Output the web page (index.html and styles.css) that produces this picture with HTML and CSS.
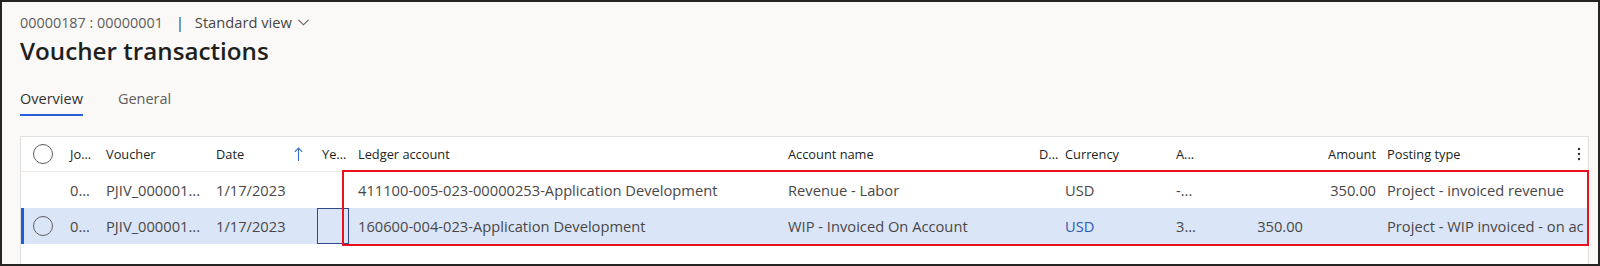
FILE: index.html
```html
<!DOCTYPE html>
<html lang="en">
<head>
    <meta charset="UTF-8">
    <title>Voucher transactions</title>
    <link rel="stylesheet" href="styles.css">
</head>
<body>
    <div class="page">
        <div class="crumbs">
            <span>00000187 : 00000001</span>
            <span class="sep">|</span>
            <span class="view">Standard view
                <svg class="chev" width="11" height="7" viewBox="0 0 11 7"><polyline points="0.5,0.8 5.5,5.8 10.5,0.8" fill="none" stroke="#605e5c" stroke-width="1.1"/></svg>
            </span>
        </div>
        <h1 class="title">Voucher transactions</h1>

        <div class="tabs">
            <div class="tab active">Overview</div>
            <div class="tab">General</div>
        </div>

        <div class="grid-wrap">
            <div class="grid">
                <div class="row head">
                    <div class="cell sel"><span class="circle"></span></div>
                    <div class="cell">Jo...</div>
                    <div class="cell">Voucher</div>
                    <div class="cell date">Date
                        <svg class="sort" width="9" height="15" viewBox="0 0 9 15"><path d="M4.5 1 V14 M0.8 4.8 L4.5 1 L8.2 4.8" fill="none" stroke="#3b6bc9" stroke-width="1.1"/></svg>
                    </div>
                    <div class="cell ye">Ye...</div>
                    <div class="cell">Ledger account</div>
                    <div class="cell">Account name</div>
                    <div class="cell short">D...</div>
                    <div class="cell">Currency</div>
                    <div class="cell">A...</div>
                    <div class="cell num"></div>
                    <div class="cell num amt">Amount</div>
                    <div class="cell">Posting type</div>
                    <div class="cell more">
                        <svg width="4" height="14" viewBox="0 0 4 14"><circle cx="2" cy="2" r="1.2" fill="#323130"/><circle cx="2" cy="7" r="1.2" fill="#323130"/><circle cx="2" cy="12" r="1.2" fill="#323130"/></svg>
                    </div>
                </div>

                <div class="row">
                    <div class="cell sel"></div>
                    <div class="cell">0...</div>
                    <div class="cell">PJIV_000001...</div>
                    <div class="cell">1/17/2023</div>
                    <div class="cell ye"></div>
                    <div class="cell">411100-005-023-00000253-Application Development</div>
                    <div class="cell">Revenue - Labor</div>
                    <div class="cell"></div>
                    <div class="cell">USD</div>
                    <div class="cell">-...</div>
                    <div class="cell num"></div>
                    <div class="cell num amt">350.00</div>
                    <div class="cell wide">Project - invoiced revenue</div>
                </div>

                <div class="row selected">
                    <div class="cell sel"><span class="circle"></span></div>
                    <div class="cell">0...</div>
                    <div class="cell">PJIV_000001...</div>
                    <div class="cell">1/17/2023</div>
                    <div class="cell ye focus"></div>
                    <div class="cell">160600-004-023-Application Development</div>
                    <div class="cell">WIP - Invoiced On Account</div>
                    <div class="cell"></div>
                    <div class="cell link">USD</div>
                    <div class="cell">3...</div>
                    <div class="cell num">350.00</div>
                    <div class="cell num amt"></div>
                    <div class="cell wide">Project - WIP invoiced - on ac</div>
                </div>
            </div>
            <div class="mark"></div>
        </div>
    </div>
</body>
</html>
```

FILE: styles.css
```css
html, body {
    margin: 0;
    padding: 0;
}
body {
    font-family: "Open Sans", "Noto Sans", sans-serif;
    background: #faf9f8;
}
.page {
    box-sizing: border-box;
    width: 1600px;
    height: 266px;
    border: 2px solid #252423;
    padding: 10px 0 0 18px;
    overflow: hidden;
}
.crumbs {
    display: flex;
    align-items: center;
    height: 20px;
    font-size: 14.4px;
    color: #605e5c;
}
.sep {
    margin: 0 11px 0 13px;
    color: #323130;
}
.view {
    display: flex;
    align-items: center;
    color: #484644;
    font-size: 14.7px;
}
.chev {
    margin-left: 6px;
}
.title {
    margin: 3px 0 0;
    height: 32px;
    line-height: 32px;
    font-size: 24.2px;
    font-weight: 600;
    color: #201f1e;
}
.tabs {
    display: flex;
    gap: 35px;
    margin-top: 22px;
}
.tab {
    font-size: 14.5px;
    line-height: 20px;
    padding-bottom: 5px;
    border-bottom: 2px solid transparent;
    color: #605e5c;
}
.tab.active {
    color: #323130;
    border-bottom-color: #2560d8;
}
.grid-wrap {
    position: relative;
    margin-top: 20px;
    width: 1569px;
}
.grid {
    box-sizing: border-box;
    height: 140px;
    background: #fff;
    border: 1px solid #e1dfdd;
    overflow: hidden;
}
.row {
    display: grid;
    grid-template-columns: 40px 36px 110px 110px 32px 430px 251px 26px 111px 34px 110px 67px 191px 1fr;
    height: 36px;
    align-items: center;
    font-size: 14.7px;
    color: #4a4847;
    white-space: nowrap;
}
.row.head {
    height: 34px;
    border-bottom: 1px solid #edebe9;
    font-size: 12.8px;
    color: #201f1e;
}
.row.selected {
    background: #dae5f8;
    box-shadow: inset 3px 0 0 #1f5fd4;
}
.cell {
    height: 100%;
    display: flex;
    align-items: center;
    padding-left: 9px;
    overflow: hidden;
}
.cell.short {
    overflow: visible;
}
.cell.sel {
    padding-left: 12px;
}
.cell.ye {
    box-sizing: border-box;
    padding-left: 5px;
}
.cell.focus {
    box-shadow: inset 0 0 0 1px #34498a;
}
.cell.date {
    justify-content: space-between;
    padding-right: 14px;
}
.cell.num {
    justify-content: flex-end;
    padding-left: 0;
    padding-right: 8px;
}
.cell.amt {
    padding-right: 2px;
}
.cell.wide {
    grid-column: span 2;
}
.cell.more {
    padding-left: 8px;
}
.cell.link {
    color: #2f5bb7;
}
.circle {
    box-sizing: border-box;
    width: 20px;
    height: 20px;
    border: 1px solid #605e5c;
    border-radius: 50%;
    background: #fff;
}
.selected .circle {
    background: transparent;
}
.mark {
    position: absolute;
    left: 322px;
    top: 34px;
    width: 1247px;
    height: 76px;
    box-sizing: border-box;
    border: 2px solid #e8111c;
    pointer-events: none;
}
```
